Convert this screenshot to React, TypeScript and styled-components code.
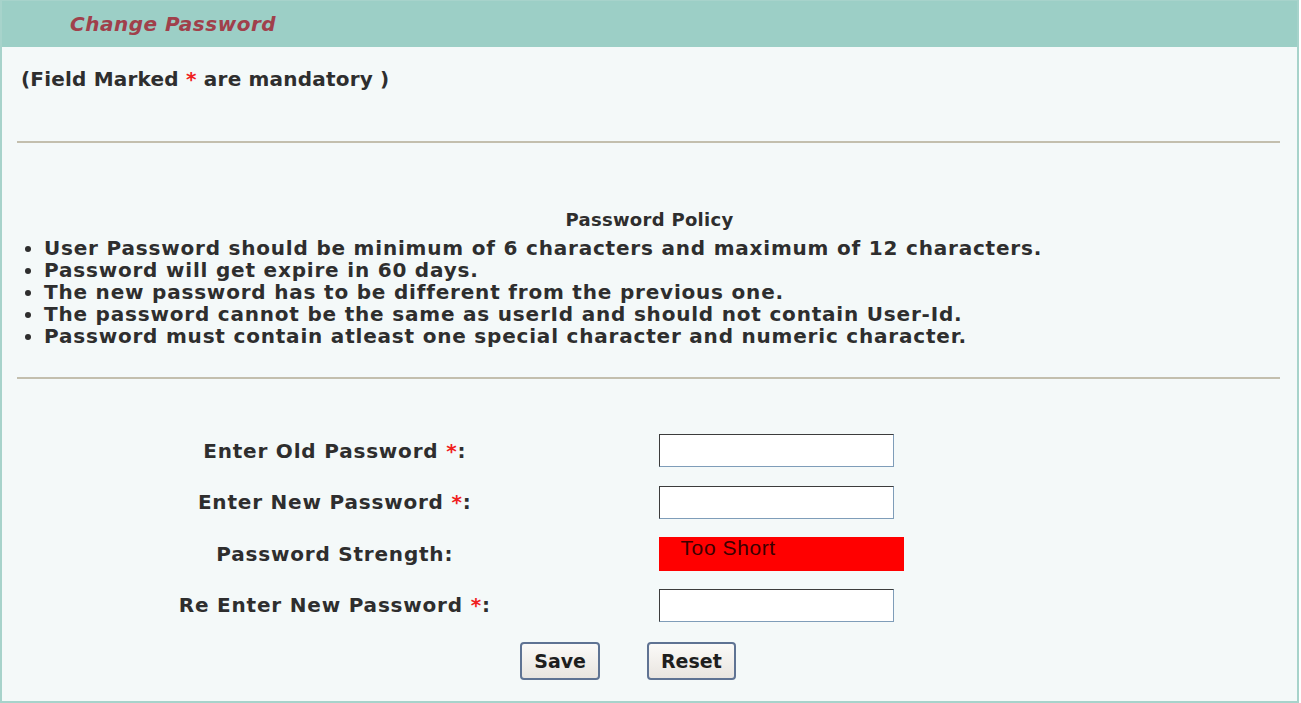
import React from "react";
import styled, { createGlobalStyle } from "styled-components";

const Global = createGlobalStyle`
  html, body { margin: 0; padding: 0; background: #ffffff; }
  body { font-family: "DejaVu Sans", Verdana, sans-serif; }
`;

const Panel = styled.div`
  width: 1299px;
  height: 703px;
  box-sizing: border-box;
  border: 2px solid #a7d3cb;
  border-top-width: 1px;
  background: #f4f9f9;
  display: flex;
  flex-direction: column;
`;

const Header = styled.div`
  height: 46px;
  flex: none;
  background: #9ccfc6;
  display: flex;
  align-items: center;
  padding-left: 68px;
`;

const Title = styled.h1`
  margin: 0;
  font-family: "DejaVu Sans", Verdana, sans-serif;
  font-style: italic;
  font-weight: bold;
  font-size: 20px;
  letter-spacing: 0.5px;
  color: #a0404b;
`;

const Text = styled.div`
  font-family: "DejaVu Sans", Verdana, sans-serif;
  font-weight: bold;
  font-size: 20px;
  line-height: 22px;
  color: #2e2e2e;
`;

const Mandatory = styled(Text)`
  margin: 21px 0 0 19px;
  letter-spacing: 0.2px;
`;

const Star = styled.span`
  color: #f02020;
`;

const Rule = styled.hr<{ $top: number }>`
  margin: ${(p) => p.$top}px 17px 0 15px;
  border: 0;
  height: 0;
  border-top: 2px solid #c3bfae;
`;

const PolicyTitle = styled(Text)`
  margin-top: 66px;
  text-align: center;
  font-size: 18px;
  letter-spacing: 0.3px;
`;

const PolicyList = styled.ul`
  margin: 6px 0 0 0;
  padding: 0 0 0 42px;
  list-style: disc;
  font-family: "DejaVu Sans", Verdana, sans-serif;
  font-weight: bold;
  font-size: 20px;
  line-height: 22px;
  letter-spacing: 0.8px;
  color: #2e2e2e;
`;

const FormGrid = styled.div`
  margin-top: 46px;
  display: grid;
  grid-template-columns: 1fr 1fr;
  grid-auto-rows: 51.5px;
  align-items: center;
`;

const Label = styled(Text)`
  text-align: center;
  padding-left: 18px;
  letter-spacing: 0.8px;
`;

const Field = styled.div`
  padding-left: 9px;
  display: flex;
  align-items: center;
`;

const Input = styled.input`
  width: 235px;
  height: 33px;
  box-sizing: border-box;
  margin: 0;
  background: #ffffff;
  border: 1px solid;
  border-color: #3c3c3c #7f9db9 #7f9db9 #3c3c3c;
  outline: none;
`;

const Strength = styled.div`
  width: 245px;
  height: 34px;
  box-sizing: border-box;
  background: #ff0000;
  padding: 0 0 0 22px;
  font-family: "Liberation Sans", Arial, sans-serif;
  font-size: 21px;
  line-height: 22px;
  letter-spacing: 0.6px;
  color: #3a0000;
`;

const Buttons = styled.div`
  margin-top: 11px;
  display: flex;
  justify-content: center;
  gap: 47px;
  padding-right: 43px;
`;

const Button = styled.button`
  height: 38px;
  box-sizing: border-box;
  padding: 0 12px;
  border: 2px solid #5f7393;
  border-radius: 4px;
  background: linear-gradient(#fbfaf8, #e9e5e0);
  font-family: "DejaVu Sans", Verdana, sans-serif;
  font-weight: bold;
  font-size: 19px;
  color: #1e1e1e;
  cursor: pointer;
`;

const policies = [
  "User Password should be minimum of 6 characters and maximum of 12 characters.",
  "Password will get expire in 60 days.",
  "The new password has to be different from the previous one.",
  "The password cannot be the same as userId and should not contain User-Id.",
  "Password must contain atleast one special character and numeric character.",
];

export default function App() {
  return (
    <>
      <Global />
      <Panel>
        <Header>
          <Title>Change Password</Title>
        </Header>
        <Mandatory>
          (Field Marked <Star>*</Star> are mandatory )
        </Mandatory>
        <Rule $top={51} />
        <PolicyTitle>Password Policy</PolicyTitle>
        <PolicyList>
          {policies.map((p) => (
            <li key={p}>{p}</li>
          ))}
        </PolicyList>
        <Rule $top={30} />
        <FormGrid>
          <Label>
            Enter Old Password <Star>*</Star>:
          </Label>
          <Field>
            <Input type="password" />
          </Field>
          <Label>
            Enter New Password <Star>*</Star>:
          </Label>
          <Field>
            <Input type="password" />
          </Field>
          <Label>Password Strength:</Label>
          <Field>
            <Strength>Too Short</Strength>
          </Field>
          <Label>
            Re Enter New Password <Star>*</Star>:
          </Label>
          <Field>
            <Input type="password" />
          </Field>
        </FormGrid>
        <Buttons>
          <Button type="button">Save</Button>
          <Button type="button">Reset</Button>
        </Buttons>
      </Panel>
    </>
  );
}
